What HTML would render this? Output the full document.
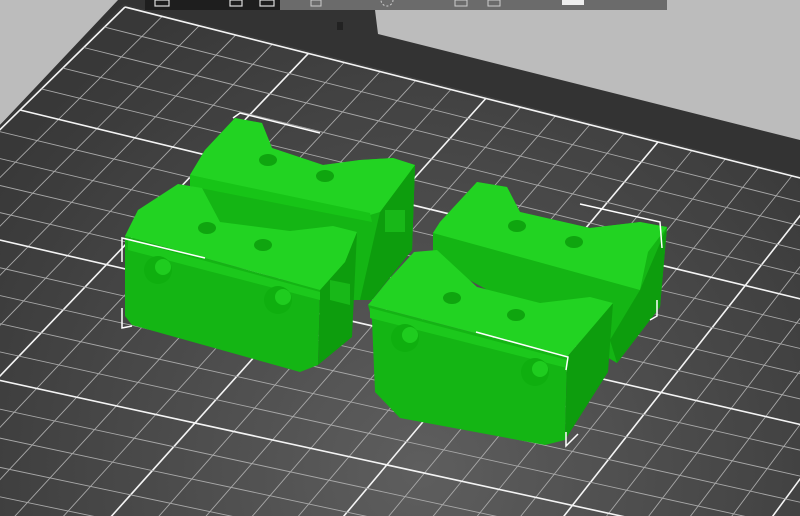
<!DOCTYPE html>
<html><head><meta charset="utf-8"><style>
html,body{margin:0;padding:0;width:800px;height:516px;overflow:hidden;background:#bcbcbc;}
svg{display:block;overflow:hidden}
</style></head><body>
<svg id="s" width="800" height="516" viewBox="0 0 800 516" xmlns="http://www.w3.org/2000/svg">
<defs>
<radialGradient id="bg" cx="420" cy="470" r="520" gradientUnits="userSpaceOnUse">
<stop offset="0" stop-color="#5e5e5e"/><stop offset="0.6" stop-color="#474747"/><stop offset="1" stop-color="#383838"/>
</radialGradient>
<clipPath id="cp"><rect width="800" height="516"/></clipPath>
</defs>
<g clip-path="url(#cp)">
<rect width="800" height="516" fill="#bcbcbc"/>
<polygon points="118,0 145,0 145,10 375,10 378,34 800,140 800,516 0,516 0,125" fill="#333"/>
<polygon id="bed" fill="url(#bg)"/>
<g id="grid"></g>
<!-- toolbar -->
<rect x="145" y="0" width="522" height="10" fill="#6b6b6b"/>
<rect x="145" y="0" width="135" height="10" fill="#1e1e1e"/>
<rect x="155" y="0" width="14" height="6" fill="none" stroke="#ddd" stroke-width="1.2"/>
<rect x="230" y="0" width="12" height="6" fill="none" stroke="#ddd" stroke-width="1.2"/>
<rect x="260" y="0" width="14" height="6" fill="none" stroke="#ddd" stroke-width="1.2"/>
<rect x="311" y="0" width="10" height="6" fill="none" stroke="#ccc"/>
<circle cx="387" cy="0" r="6" fill="none" stroke="#ccc" stroke-dasharray="2 2"/>
<rect x="455" y="0" width="12" height="6" fill="none" stroke="#ccc"/>
<rect x="488" y="0" width="12" height="6" fill="none" stroke="#ccc"/>
<rect x="562" y="0" width="22" height="5" fill="#eee"/>
<rect x="337" y="22" width="6" height="8" fill="#222"/>
<!-- block A back-left -->
<polygon points="190,175 205,150 235,118 262,123 272,148 323,165 360,160 393,158 415,165 412,250 370,300 330,300 200,240" fill="#14b514"/>
<polygon points="380,212 415,165 412,250 372,300 360,300" fill="#0d9d0d"/>
<polygon points="190,175 205,150 235,118 262,123 272,148 323,165 360,160 393,158 415,165 380,212 370,215" fill="#22d322"/>
<polygon points="190,175 370,213 372,222 190,186" fill="#17c417"/>
<polygon points="385,210 405,210 405,232 385,232" fill="#18b818"/>
<ellipse cx="268" cy="160" rx="9" ry="6" fill="#0fa50f"/>
<ellipse cx="325" cy="176" rx="9" ry="6" fill="#0fa50f"/>
<!-- block B front-left -->
<polygon points="125,236 320,290 318,365 300,372 132,325 125,316" fill="#14b514"/>
<polygon points="320,290 345,262 357,232 352,337 318,365" fill="#0d9d0d"/>
<polygon points="125,236 138,210 178,184 202,188 220,222 290,231 333,226 357,232 345,262 320,290" fill="#22d322"/>
<polygon points="128,240 320,292 320,300 128,250" fill="#1cc81c"/>
<polygon points="330,280 350,284 350,305 330,300" fill="#18b818"/>
<ellipse cx="207" cy="228" rx="9" ry="6" fill="#0fa50f"/>
<ellipse cx="263" cy="245" rx="9" ry="6" fill="#0fa50f"/>
<circle cx="158" cy="270" r="14" fill="#0faf0f"/><circle cx="163" cy="267" r="8" fill="#1fcc1f"/>
<circle cx="278" cy="300" r="14" fill="#0faf0f"/><circle cx="283" cy="297" r="8" fill="#1fcc1f"/>
<!-- block C back-right -->
<polygon points="433,233 440,222 477,182 507,187 520,212 590,228 640,222 667,227 660,307 617,363 560,330 433,260" fill="#14b514"/>
<polygon points="640,290 667,227 660,307 617,363 610,340" fill="#0d9d0d"/>
<polygon points="433,233 440,222 477,182 507,187 520,212 590,228 640,222 667,227 648,252 640,290" fill="#22d322"/>
<ellipse cx="517" cy="226" rx="9" ry="6" fill="#0fa50f"/>
<ellipse cx="574" cy="242" rx="9" ry="6" fill="#0fa50f"/>
<!-- block D front-right -->
<polygon points="368,305 567,357 565,440 545,445 400,418 375,392 372,320" fill="#14b514"/>
<polygon points="567,357 613,303 608,372 565,440" fill="#0d9d0d"/>
<polygon points="368,305 391,277 414,252 437,250 477,287 540,303 590,297 613,303 590,330 567,357" fill="#22d322"/>
<polygon points="370,308 567,360 567,368 370,318" fill="#1cc81c"/>
<ellipse cx="452" cy="298" rx="9" ry="6" fill="#0fa50f"/>
<ellipse cx="516" cy="315" rx="9" ry="6" fill="#0fa50f"/>
<circle cx="405" cy="338" r="14" fill="#0faf0f"/><circle cx="410" cy="335" r="8" fill="#1fcc1f"/>
<circle cx="535" cy="372" r="14" fill="#0faf0f"/><circle cx="540" cy="369" r="8" fill="#1fcc1f"/>
<!-- bbox marks -->
<g stroke="#fff" stroke-width="1.5" fill="none">
<polyline points="122,262 122,238 205,258"/>
<polyline points="122,308 122,328 132,326"/>
<polyline points="233,118 240,113 320,133"/>
<polyline points="580,204 660,222 662,248"/>
<polyline points="657,300 657,316 650,320"/>
<polyline points="476,332 568,357 566,370"/>
<polyline points="566,432 566,446 578,434"/>
</g>
</g>
</svg>
<script>
(function(){
var src=[[0,0],[3,0],[0,1],[2,3]], dst=[[125,7],[658,142],[20,110],[195,423]];
var A=[],B=[];
for(var i=0;i<4;i++){var u=src[i][0],v=src[i][1],x=dst[i][0],y=dst[i][1];
A.push([u,v,1,0,0,0,-u*x,-v*x]);B.push(x);
A.push([0,0,0,u,v,1,-u*y,-v*y]);B.push(y);}
var n=8;for(var c=0;c<n;c++){var p=c;for(var r=c+1;r<n;r++)if(Math.abs(A[r][c])>Math.abs(A[p][c]))p=r;
var t=A[c];A[c]=A[p];A[p]=t;t=B[c];B[c]=B[p];B[p]=t;
for(var r=0;r<n;r++){if(r==c)continue;var f=A[r][c]/A[c][c];for(var k=c;k<n;k++)A[r][k]-=f*A[c][k];B[r]-=f*B[c];}}
var h=[];for(var i=0;i<n;i++)h.push(B[i]/A[i][i]);
function P(u,v){var w=h[6]*u+h[7]*v+1;return [(h[0]*u+h[1]*v+h[2])/w,(h[3]*u+h[4]*v+h[5])/w];}
var U=6.0,V=4.6,ns="http://www.w3.org/2000/svg",g=document.getElementById('grid');
var c=[P(-0.02,-0.02),P(U+0.02,-0.02),P(U+0.02,V),P(-0.02,V)];
document.getElementById('bed').setAttribute('points',c.map(function(q){return q[0].toFixed(1)+','+q[1].toFixed(1)}).join(' '));
function L(a,b,maj){var e=document.createElementNS(ns,'line');e.setAttribute('x1',a[0].toFixed(1));e.setAttribute('y1',a[1].toFixed(1));e.setAttribute('x2',b[0].toFixed(1));e.setAttribute('y2',b[1].toFixed(1));
e.setAttribute('stroke',maj?'#f4f4f4':'#a8a8a8');e.setAttribute('stroke-width',maj?1.6:0.9);g.appendChild(e);}
for(var i=0;i<=U*5+0.01;i++){var u=i/5;L(P(u,0),P(u,V),i%5==0);}
for(var j=0;j<=V*5+0.01;j++){var v=j/5;L(P(0,v),P(U,v),j%5==0);}
})();
</script>
</body></html>
